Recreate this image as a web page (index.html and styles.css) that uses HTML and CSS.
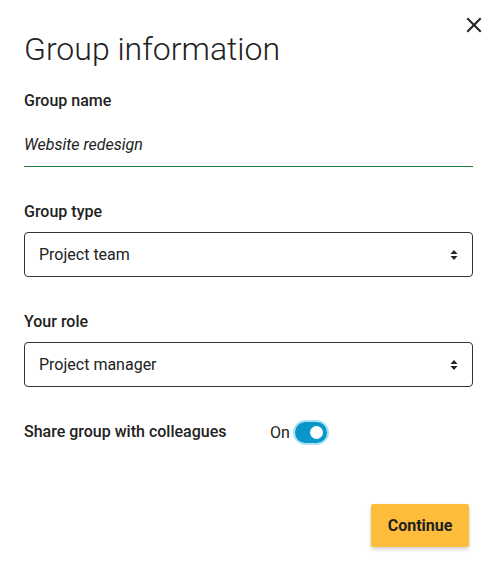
FILE: index.html
```html
<!DOCTYPE html>
<html lang="en">
<head>
<meta charset="utf-8">
<title>Group information</title>
<link rel="stylesheet" href="styles.css">
</head>
<body>
<div class="dialog">
  <button class="close" aria-label="Close">
    <svg width="16" height="16" viewBox="0 0 16 16"><path d="M2 2L14 14M14 2L2 14" stroke="#222" stroke-width="2" stroke-linecap="square"/></svg>
  </button>
  <h1 class="title">Group information</h1>

  <div class="field field-name">
    <label class="label">Group name</label>
    <div class="text-input">Website redesign</div>
  </div>

  <div class="field">
    <label class="label">Group type</label>
    <div class="select">
      <span>Project team</span>
      <svg class="arrows" width="8" height="12" viewBox="0 0 8 12"><path d="M4 1L7.5 5H0.5Z M4 11L0.5 7H7.5Z" fill="#222"/></svg>
    </div>
  </div>

  <div class="field">
    <label class="label">Your role</label>
    <div class="select">
      <span>Project manager</span>
      <svg class="arrows" width="8" height="12" viewBox="0 0 8 12"><path d="M4 1L7.5 5H0.5Z M4 11L0.5 7H7.5Z" fill="#222"/></svg>
    </div>
  </div>

  <div class="share-row">
    <span class="label share-label">Share group with colleagues</span>
    <span class="toggle-wrap">
      <span class="on">On</span>
      <span class="toggle"><span class="knob"></span></span>
    </span>
  </div>

  <div class="actions">
    <button class="continue">Continue</button>
  </div>
</div>
</body>
</html>
```

FILE: styles.css
```css
* { box-sizing: border-box; }
html, body {
  margin: 0;
  padding: 0;
  background: #fff;
}
body {
  font-family: Roboto, "Liberation Sans", sans-serif;
  color: #222;
}
.dialog {
  position: relative;
  width: 495px;
  height: 573px;
  padding: 29px 22px 0 24px;
}
.close {
  position: absolute;
  top: 17px;
  right: 13px;
  width: 16px;
  height: 16px;
  padding: 0;
  border: 0;
  background: none;
  display: flex;
}
.title {
  margin: 0;
  font-size: 32px;
  line-height: 40px;
  font-weight: 300;
  color: #222;
}
.field {
  display: flex;
  flex-direction: column;
}
.field-name { margin-top: 22px; }
.field + .field { margin-top: 35px; }
.label {
  font-size: 16px;
  line-height: 20px;
  font-weight: 500;
  color: #222;
}
.text-input {
  margin-top: 24px;
  font-size: 16px;
  font-style: italic;
  line-height: 20px;
  padding-bottom: 11px;
  border-bottom: 1px solid #1e7b3b;
  color: #222;
}
.select {
  margin-top: 10px;
  height: 45px;
  border: 1px solid #333;
  border-radius: 4px;
  display: flex;
  align-items: center;
  justify-content: space-between;
  padding: 0 14px 0 14px;
  font-size: 16px;
}
.arrows { display: block; }
.share-row {
  margin-top: 34px;
  display: flex;
  align-items: center;
  height: 22px;
}
.share-label { width: 246px; }
.toggle-wrap {
  display: flex;
  align-items: center;
  gap: 5px;
}
.on { font-size: 16px; }
.toggle {
  width: 32px;
  height: 21px;
  border-radius: 11px;
  background: #0a96c8;
  box-shadow: 0 0 0 2px #a8e2f2;
  position: relative;
  display: inline-block;
}
.knob {
  position: absolute;
  top: 4px;
  right: 4px;
  width: 13px;
  height: 13px;
  border-radius: 50%;
  background: #fff;
}
.actions {
  margin-top: 61px;
  display: flex;
  justify-content: flex-end;
  padding-right: 4px;
}
.continue {
  width: 98px;
  height: 43px;
  border: 0;
  border-radius: 2px;
  background: #fdbd3a;
  font-family: Roboto, "Liberation Sans", sans-serif;
  font-size: 16px;
  font-weight: 700;
  color: #222;
  box-shadow: 0 2px 4px rgba(0,0,0,0.2);
}
```
